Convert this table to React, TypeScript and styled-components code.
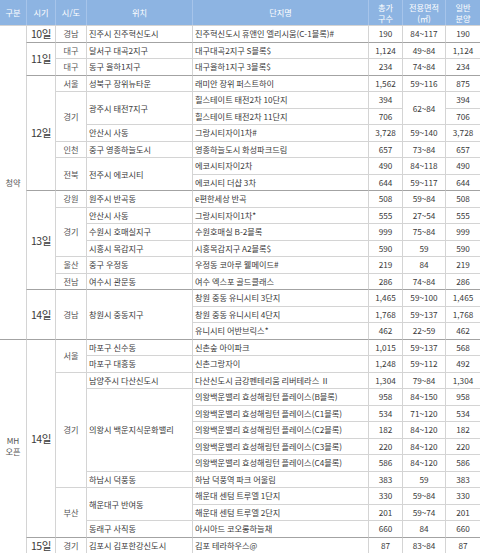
import React from 'react';
import styled, { createGlobalStyle } from 'styled-components';

type Kind = 'div' | 'date' | 'region' | 'loc' | 'name' | 'num';

interface CellData {
  text: string;
  kind: Kind;
  rs?: number;
}

interface RowData {
  group?: boolean;
  cells: CellData[];
}

const GlobalStyle = createGlobalStyle`
  html, body {
    margin: 0;
    padding: 0;
    background: #fff;
  }
  body {
    font-family: 'Noto Sans CJK KR', 'Noto Sans', sans-serif;
  }
`;

const Table = styled.table`
  width: 480px;
  table-layout: fixed;
  border-collapse: separate;
  border-spacing: 0;
  color: #3a3a3a;
  font-size: 8.2px;
`;

const HeadRow = styled.tr`
  height: 25px;
`;

const BodyRow = styled.tr`
  height: 16.5px;
`;

const HeadCell = styled.th<{ $first?: boolean }>`
  padding: 0;
  background: #8db4e2;
  color: #fff;
  font-weight: normal;
  font-size: 8.2px;
  line-height: 11px;
  text-align: center;
  vertical-align: middle;
  border-left: ${(props) => (props.$first ? 'none' : '1px solid #a6c4ea')};
`;

const Cell = styled.td<{ $kind: Kind; $group?: boolean }>`
  padding: ${(props) => (props.$kind === 'loc' || props.$kind === 'name' ? '0 0 0 2px' : '0')};
  text-align: ${(props) => (props.$kind === 'loc' || props.$kind === 'name' ? 'left' : 'center')};
  vertical-align: middle;
  white-space: nowrap;
  overflow: hidden;
  line-height: 11px;
  font-size: ${(props) => (props.$kind === 'date' ? '10.5px' : '8.2px')};
  letter-spacing: ${(props) => (props.$kind === 'date' ? '-0.4px' : '0')};
  color: ${(props) => (props.$kind === 'region' || props.$kind === 'div' ? '#555' : '#3a3a3a')};
  border-top: 1px solid ${(props) => (props.$group ? '#a3a3a3' : '#d4d4d4')};
  border-left: ${(props) => (props.$kind === 'div' ? 'none' : '1px solid #d4d4d4')};
`;

const D = (text: string, rs?: number): CellData => ({ text, kind: 'div', rs });
const T = (text: string, rs?: number): CellData => ({ text, kind: 'date', rs });
const R = (text: string, rs?: number): CellData => ({ text, kind: 'region', rs });
const L = (text: string, rs?: number): CellData => ({ text, kind: 'loc', rs });
const N = (text: string): CellData => ({ text, kind: 'name' });
const V = (text: string, rs?: number): CellData => ({ text, kind: 'num', rs });
const nums = (a: string, b: string, c: string) => [V(a), V(b), V(c)];

const villa = (block: string, a: string, b: string) => ({
  cells: [N(`의왕백운밸리 효성해링턴 플레이스(${block}블록)`), ...nums(a, b, a)],
});

const rows: RowData[] = [
  { cells: [D('청약', 19), T('10일'), R('경남'), L('진주시 진주혁신도시'), N('진주혁신도시 휴앤인 엘리시움(C-1블록)#'), ...nums('190', '84~117', '190')] },
  { group: true, cells: [T('11일', 2), R('대구'), L('달서구 대곡2지구'), N('대구대곡2지구 S블록$'), ...nums('1,124', '49~84', '1,124')] },
  { cells: [R('대구'), L('동구 율하1지구'), N('대구율하1지구 3블록$'), ...nums('234', '74~84', '234')] },
  { group: true, cells: [T('12일', 7), R('서울'), L('성북구 장위뉴타운'), N('래미안 장위 퍼스트하이'), ...nums('1,562', '59~116', '875')] },
  { cells: [R('경기', 3), L('광주시 태전7지구', 2), N('힐스테이트 태전2차 10단지'), V('394'), V('62~84', 2), V('394')] },
  { cells: [N('힐스테이트 태전2차 11단지'), V('706'), V('706')] },
  { cells: [L('안산시 사동'), N('그랑시티자이1차#'), ...nums('3,728', '59~140', '3,728')] },
  { cells: [R('인천'), L('중구 영종하늘도시'), N('영종하늘도시 화성파크드림'), ...nums('657', '73~84', '657')] },
  { cells: [R('전북', 2), L('전주시 에코시티', 2), N('에코시티자이2차'), ...nums('490', '84~118', '490')] },
  { cells: [N('에코시티 더샵 3차'), ...nums('644', '59~117', '644')] },
  { group: true, cells: [T('13일', 6), R('강원'), L('원주시 반곡동'), N('e편한세상 반곡'), ...nums('508', '59~84', '508')] },
  { cells: [R('경기', 3), L('안산시 사동'), N('그랑시티자이1차*'), ...nums('555', '27~54', '555')] },
  { cells: [L('수원시 호매실지구'), N('수원호매실 B-2블록'), ...nums('999', '75~84', '999')] },
  { cells: [L('시흥시 목감지구'), N('시흥목감지구 A2블록$'), ...nums('590', '59', '590')] },
  { cells: [R('울산'), L('중구 우정동'), N('우정동 코아루 웰메이드#'), ...nums('219', '84', '219')] },
  { cells: [R('전남'), L('여수시 관문동'), N('여수 엑스포 골드클래스'), ...nums('286', '74~84', '286')] },
  { group: true, cells: [T('14일', 3), R('경남', 3), L('창원시 중동지구', 3), N('창원 중동 유니시티 3단지'), ...nums('1,465', '59~100', '1,465')] },
  { cells: [N('창원 중동 유니시티 4단지'), ...nums('1,768', '59~137', '1,768')] },
  { cells: [N('유니시티 어반브릭스*'), ...nums('462', '22~59', '462')] },
  { group: true, cells: [D('MH\n오픈', 13), T('14일', 12), R('서울', 2), L('마포구 신수동'), N('신촌숲 아이파크'), ...nums('1,015', '59~137', '568')] },
  { cells: [L('마포구 대흥동'), N('신촌그랑자이'), ...nums('1,248', '59~112', '492')] },
  { cells: [R('경기', 7), L('남양주시 다산신도시'), N('다산신도시 금강펜테리움 리버테라스 Ⅱ'), ...nums('1,304', '79~84', '1,304')] },
  { cells: [L('의왕시 백운지식문화밸리', 5), N('의왕백운밸리 효성해링턴 플레이스(B블록)'), ...nums('958', '84~150', '958')] },
  villa('C1', '534', '71~120'),
  villa('C2', '182', '84~120'),
  villa('C3', '220', '84~120'),
  villa('C4', '586', '84~120'),
  { cells: [L('하남시 덕풍동'), N('하남 덕풍역 파크 어울림'), ...nums('383', '59', '383')] },
  { cells: [R('부산', 3), L('해운대구 반여동', 2), N('해운대 센텀 트루엘 1단지'), ...nums('330', '59~84', '330')] },
  { cells: [N('해운대 센텀 트루엘 2단지'), ...nums('201', '59~74', '201')] },
  { cells: [L('동래구 사직동'), N('아시아드 코오롱하늘채'), ...nums('660', '84', '660')] },
  { group: true, cells: [T('15일'), R('경기'), L('김포시 김포한강신도시'), N('김포 테라하우스@'), ...nums('87', '83~84', '87')] },
];

const widths = [26, 29, 31, 106, 176, 34, 43, 35];

const App: React.FC = function () {
  return (
    <>
      <GlobalStyle />
      <Table>
        <colgroup>
          {widths.map((w, i) => (
            <col key={i} style={{ width: w }} />
          ))}
        </colgroup>
        <thead>
          <HeadRow>
            <HeadCell $first>구분</HeadCell>
            <HeadCell>시기</HeadCell>
            <HeadCell>시/도</HeadCell>
            <HeadCell>위치</HeadCell>
            <HeadCell>단지명</HeadCell>
            <HeadCell>
              총가
              <br />
              구수
            </HeadCell>
            <HeadCell>
              전용면적
              <br />
              (㎡)
            </HeadCell>
            <HeadCell>
              일반
              <br />
              분양
            </HeadCell>
          </HeadRow>
        </thead>
        <tbody>
          {rows.map((row, i) => (
            <BodyRow key={i}>
              {row.cells.map((cell, j) => (
                <Cell key={j} $kind={cell.kind} $group={row.group} rowSpan={cell.rs}>
                  {cell.text.split('\n').map((line, k) => (
                    <React.Fragment key={k}>
                      {k > 0 && <br />}
                      {line}
                    </React.Fragment>
                  ))}
                </Cell>
              ))}
            </BodyRow>
          ))}
        </tbody>
      </Table>
    </>
  );
};

export default App;
